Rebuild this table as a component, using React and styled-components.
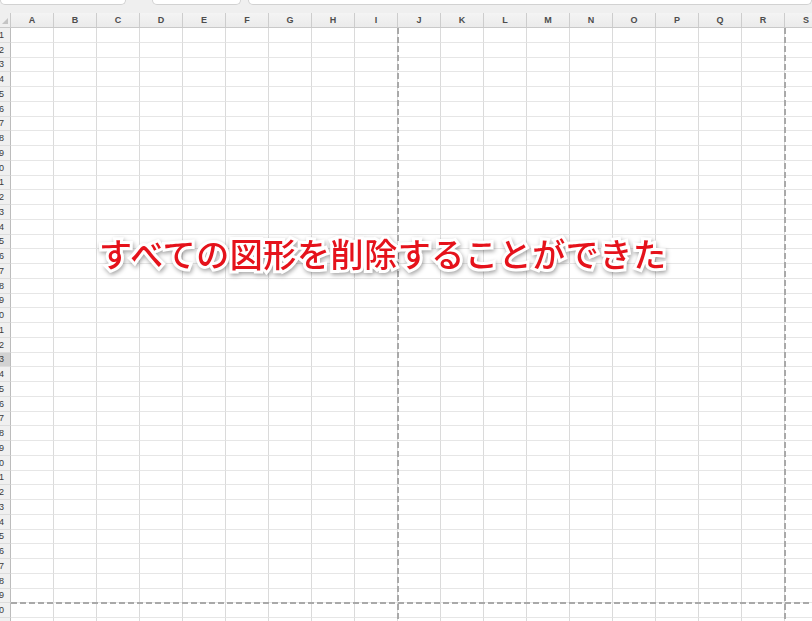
import React from 'react';
import styled, { createGlobalStyle } from 'styled-components';

const GlobalStyle = createGlobalStyle`
  html, body {
    margin: 0;
    padding: 0;
    background: #ffffff;
    overflow: hidden;
  }
  body {
    font-family: "Liberation Sans", "Noto Sans CJK JP", sans-serif;
  }
`;

const COL_W = 43;
const ROW_H = 14.75;
const HEAD_W = 11;

const Sheet = styled.div`
  position: relative;
  width: 812px;
  height: 621px;
  overflow: hidden;
  background: #fff;
  display: flex;
  flex-direction: column;
`;

const TopBar = styled.div`
  height: 6px;
  flex: none;
  display: flex;
  gap: 7px;
  background: #efefef;
`;

const Field = styled.div`
  width: ${p => p.$w}px;
  flex: ${p => (p.$grow ? 1 : 'none')};
  margin-left: ${p => p.$gap || 0}px;
  height: 5px;
  background: #fff;
  border: 1px solid #d2d2d2;
  border-top: none;
  border-radius: 0 0 6px 6px;
  box-sizing: border-box;
`;

const HeaderRow = styled.div`
  height: 22px;
  flex: none;
  display: flex;
  background: #efefef;
  border-bottom: 1px solid #c9c9c9;
  box-sizing: border-box;
`;

const Corner = styled.div`
  width: ${HEAD_W}px;
  flex: none;
  position: relative;
  border-right: 1px solid #c9c9c9;
  box-sizing: border-box;
  margin-top: 7px;
  &::after {
    content: '';
    position: absolute;
    left: 2px;
    bottom: 3px;
    border-style: solid;
    border-width: 0 0 6px 6px;
    border-color: transparent transparent #c4c4c4 transparent;
  }
`;

const ColHead = styled.div`
  width: ${COL_W}px;
  flex: none;
  margin-top: 7px;
  display: flex;
  align-items: center;
  justify-content: center;
  border-right: 1px solid #cdcdcd;
  box-sizing: border-box;
  background: linear-gradient(#f4f4f4, #ebebeb);
  font-size: 9px;
  font-weight: bold;
  color: #4d4d4d;
  padding-bottom: 1px;
`;

const Body = styled.div`
  flex: 1;
  display: flex;
  flex-direction: column;
  overflow: hidden;
`;

const Row = styled.div`
  height: ${ROW_H}px;
  flex: none;
  display: flex;
`;

const RowHead = styled.div`
  width: ${HEAD_W}px;
  flex: none;
  display: flex;
  justify-content: flex-end;
  align-items: center;
  overflow: hidden;
  padding-right: 6px;
  box-sizing: border-box;
  background: ${p => (p.$active ? '#d2d2d2' : '#f0f0f0')};
  border-right: 1px solid #bcbcbc;
  border-bottom: 1px solid #dcdcdc;
  font-size: 9px;
  color: #3a3a3a;
  white-space: nowrap;
`;

const Cell = styled.div`
  width: ${COL_W}px;
  flex: none;
  box-sizing: border-box;
  border-right: 1px solid #dadada;
  border-bottom: 1px solid #e6e6e6;
`;

const BreakV = styled.div`
  position: absolute;
  top: 28px;
  bottom: 0;
  left: ${p => p.$x}px;
  width: 2px;
  background: repeating-linear-gradient(#a9a9a9 0 6px, transparent 6px 9px);
`;

const BreakH = styled.div`
  position: absolute;
  left: ${HEAD_W}px;
  right: 0;
  top: ${p => p.$y}px;
  height: 2px;
  background: repeating-linear-gradient(90deg, #a9a9a9 0 6px, transparent 6px 9px);
`;

const Caption = styled.div`
  position: absolute;
  left: 99px;
  top: 229px;
  font-family: "Noto Sans CJK JP", sans-serif;
  font-size: 33px;
  font-weight: 500;
  letter-spacing: 0.6px;
  color: #e5121b;
  white-space: nowrap;
  -webkit-text-stroke: 6px #ffffff;
  paint-order: stroke fill;
  filter: drop-shadow(1px 2px 2px rgba(0, 0, 0, 0.35));
`;

const columns = 'ABCDEFGHIJKLMNOPQRS'.split('');
const rows = Array.from({ length: 42 }, (_, i) => i + 1);

const App = () => {
  return (
    <>
      <GlobalStyle />
      <Sheet>
        <TopBar>
          <Field $w={126} />
          <Field $w={89} $gap={19} />
          <Field $grow />
        </TopBar>
        <HeaderRow>
          <Corner />
          {columns.map(c => (
            <ColHead key={c}>{c}</ColHead>
          ))}
        </HeaderRow>
        <Body>
          {rows.map(r => (
            <Row key={r}>
              <RowHead $active={r === 23}>{r}</RowHead>
              {columns.map(c => (
                <Cell key={c} />
              ))}
            </Row>
          ))}
        </Body>
        <BreakV $x={397} />
        <BreakV $x={784} />
        <BreakH $y={602} />
        <Caption>すべての図形を削除することができた</Caption>
      </Sheet>
    </>
  );
};

export default App;
